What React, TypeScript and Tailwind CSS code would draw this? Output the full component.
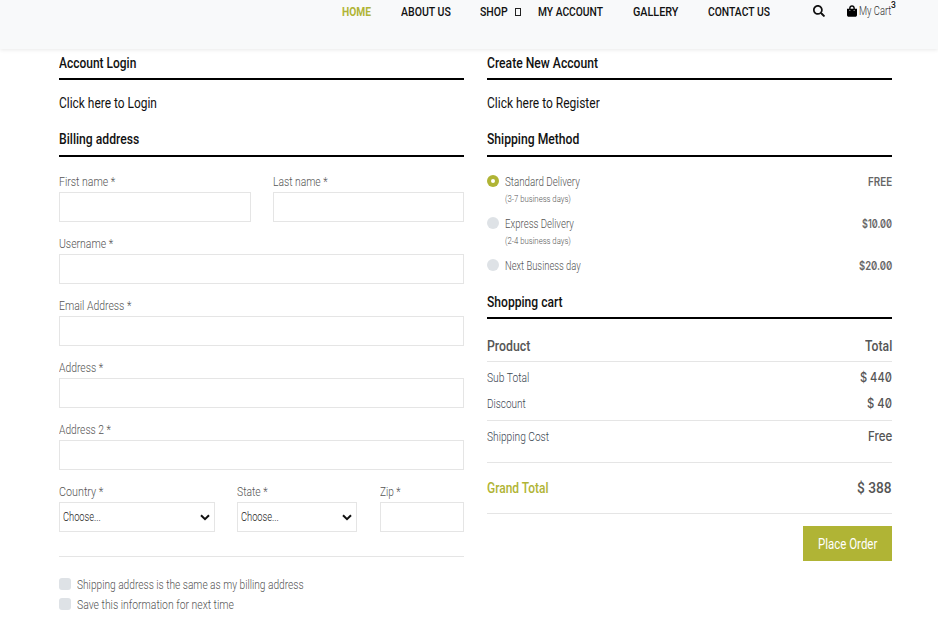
import { useLayoutEffect, useRef, useState } from "react";
import { clsx } from "clsx";

// Condenses a line of text horizontally so that it takes exactly `w` pixels.
function T({ w, children, className }: { w: number; children: string; className?: string }) {
  const ref = useRef<HTMLSpanElement>(null);
  const [scale, setScale] = useState(1);
  useLayoutEffect(() => {
    if (ref.current) setScale(w / ref.current.offsetWidth);
  }, [w, children]);
  return (
    <span className={clsx("block shrink-0 whitespace-nowrap", className)} style={{ width: w }}>
      <span ref={ref} className="inline-block origin-left" style={{ transform: `scaleX(${scale})` }}>
        {children}
      </span>
    </span>
  );
}

function Heading({ w, children, className }: { w: number; children: string; className: string }) {
  return (
    <h3 className={clsx("h-[31px] border-b-2 border-black text-sm font-medium text-[#111]", className)}>
      <T w={w}>{children}</T>
    </h3>
  );
}

function Field({ label, w, className, select }: { label: string; w: number; className?: string; select?: boolean }) {
  return (
    <div className={className}>
      <div className="h-5 text-xs leading-5 font-light text-[#555]">
        <T w={w}>{label}</T>
      </div>
      <div className="flex h-[30px] items-center justify-between border border-[#e5e5e5] bg-white pr-1 pl-[3px] text-xs font-light text-[#222]">
        {select && (
          <>
            <T w={38}>Choose...</T>
            <svg width="10" height="7" viewBox="0 0 10 7" fill="none" stroke="#111" strokeWidth="2">
              <path d="M1 1.2 5 5.2 9 1.2" />
            </svg>
          </>
        )}
      </div>
    </div>
  );
}

function Delivery({ name, w, days, price, pw, on }: { name: string; w: number; days?: string; price: string; pw: number; on?: boolean }) {
  return (
    <div className="flex h-[42px]">
      <span className={clsx("mt-[3px] flex size-3 items-center justify-center rounded-full", on ? "bg-[#b0b435]" : "bg-[#dee2e6]")}>
        {on && <span className="size-[4.5px] rounded-full bg-white" />}
      </span>
      <div className="ml-1.5 text-xs leading-5 font-light text-[#555]">
        <T w={w}>{name}</T>
        {days && <T w={66} className="text-[9.5px] leading-[14px] text-[#555]">{days}</T>}
      </div>
      <T w={pw} className="ml-auto font-[Inter] text-[11.5px] leading-5 font-semibold text-[#666] [font-feature-settings:'zero']">{price}</T>
    </div>
  );
}

function Row({ label, w, value, vw, className }: { label: string; w: number; value: string; vw: number; className: string }) {
  return (
    <div className={clsx("flex items-center justify-between", className)}>
      <T w={w} className="pt-px text-xs font-light text-[#3a4652]">{label}</T>
      <T w={vw} className="font-[Inter] text-[13.5px] font-medium text-[#555] [font-feature-settings:'zero']">{value}</T>
    </div>
  );
}

function Check({ label, w }: { label: string; w: number }) {
  return (
    <div className="flex h-5 items-center">
      <span className="size-3 rounded-[3px] bg-[#dee2e6]" />
      <T w={w} className="ml-1.5 pt-px text-xs leading-5 font-light text-[#555]">{label}</T>
    </div>
  );
}

export default function App() {
  return (
    <div className="h-[617px] w-[938px] overflow-hidden bg-white font-[Roboto,sans-serif]">
      <header className="flex h-[49px] items-start bg-[#f8f9fa] pl-[342px] text-xs leading-6 font-medium text-[#111] shadow-[0_1px_4px_rgba(0,0,0,0.09)]">
        <T w={29} className="font-bold text-[#b0b435]">HOME</T>
        <T w={50} className="ml-[30px]">ABOUT US</T>
        <T w={28} className="ml-[29px]">SHOP</T>
        <span className="mt-2 ml-[7px] h-2 w-1.5 border border-[#222]" />
        <T w={65} className="ml-[17px]">MY ACCOUNT</T>
        <T w={45} className="ml-[30px]">GALLERY</T>
        <T w={62} className="ml-[30px]">CONTACT US</T>
        <svg className="mt-[5px] ml-[43px]" width="12" height="12" viewBox="0 0 512 512" fill="#111">
          <path d="M505 442.7 405.3 343c-4.500-4.500-10.600-7-17-7H372c27.600-35.300 44-79.700 44-128C416 93.100 322.900 0 208 0S0 93.100 0 208s93.100 208 208 208c48.300 0 92.700-16.400 128-44v16.300c0 6.400 2.500 12.500 7 17l99.700 99.700c9.400 9.400 24.600 9.400 33.900 0l28.300-28.300c9.400-9.400 9.400-24.600.1-34zM208 344c-75 0-136-61-136-136S133 72 208 72s136 61 136 136-61 136-136 136z" />
        </svg>
        <svg className="mt-[5px] ml-[22px]" width="10" height="12" viewBox="0 0 448 512" fill="#000">
          <path d="M352 160v-32C352 57.400 294.600 0 224 0S96 57.400 96 128v32H0v272c0 44.200 35.800 80 80 80h288c44.200 0 80-35.800 80-80V160h-96zM160 128c0-35.300 28.700-64 64-64s64 28.700 64 64v32H160v-32zm160 120a24 24 0 1 1 0-48 24 24 0 0 1 0 48zm-192 0a24 24 0 1 1 0-48 24 24 0 0 1 0 48z" />
        </svg>
        <T w={32} className="ml-0.5 leading-[22px] font-light text-[#333]">My Cart</T>
        <T w={5} className="pt-px text-[8.5px] leading-2 font-medium">3</T>
      </header>

      <main className="flex gap-[23px] pl-[59px]">
        <section className="w-[405px]">
          <Heading w={77} className="leading-[28px]">Account Login</Heading>
          <div className="text-sm leading-[46px] text-[#111]"><T w={98}>Click here to Login</T></div>
          <Heading w={80} className="leading-[26px]">Billing address</Heading>
          <div className="mt-[15px] flex flex-col gap-3">
            <div className="flex gap-[22px]">
              <Field label="First name *" w={56} className="w-48" />
              <Field label="Last name *" w={55} className="w-[191px]" />
            </div>
            <Field label="Username *" w={54} />
            <Field label="Email Address *" w={72} />
            <Field label="Address *" w={44} />
            <Field label="Address 2 *" w={52} />
            <div className="flex">
              <Field label="Country *" w={44} className="w-[156px]" select />
              <Field label="State *" w={31} className="ml-[22px] w-[120px]" select />
              <Field label="Zip *" w={21} className="ml-[23px] w-[84px]" />
            </div>
          </div>
          <div className="mt-6 border-t border-[#e5e5e5] pt-[17px]">
            <Check label="Shipping address is the same as my billing address" w={227} />
            <Check label="Save this information for next time" w={157} />
          </div>
        </section>

        <section className="w-[405px]">
          <Heading w={111} className="leading-[28px]">Create New Account</Heading>
          <div className="text-sm leading-[46px] text-[#111]"><T w={113}>Click here to Register</T></div>
          <Heading w={92} className="leading-[26px]">Shipping Method</Heading>
          <div className="mt-[15px] h-[116px]">
            <Delivery name="Standard Delivery" w={75} days="(3-7 business days)" price="FREE" pw={24} on />
            <Delivery name="Express Delivery" w={69} days="(2-4 business days)" price="$10.00" pw={30} />
            <Delivery name="Next Business day" w={76} price="$20.00" pw={33} />
          </div>
          <Heading w={76} className="leading-[28px]">Shopping cart</Heading>
          <div className="flex h-[43px] justify-between border-b border-[#e5e5e5] pt-4 text-sm leading-[22px] font-medium text-[#555]">
            <T w={43}>Product</T>
            <T w={27}>Total</T>
          </div>
          <div className="h-[59px] border-b border-[#e5e5e5] pt-0.5">
            <Row label="Sub Total" w={42} value="$ 440" vw={32} className="h-[26px]" />
            <Row label="Discount" w={39} value="$ 40" vw={25} className="h-[26px]" />
          </div>
          <div className="h-[42px] border-b border-[#e5e5e5] pt-0.5">
            <Row label="Shipping Cost" w={62} value="Free" vw={24} className="h-[26px]" />
          </div>
          <div className="flex h-[51px] items-center justify-between border-b border-[#e5e5e5] pt-px text-[14.5px] font-medium">
            <T w={62} className="text-[#b0b435]">Grand Total</T>
            <T w={35} className="text-[#555]">$ 388</T>
          </div>
          <button className="mt-3 ml-auto flex h-[35px] w-[89px] items-center justify-center bg-[#b0b435] text-sm text-white">
            <T w={59}>Place Order</T>
          </button>
        </section>
      </main>
    </div>
  );
}
